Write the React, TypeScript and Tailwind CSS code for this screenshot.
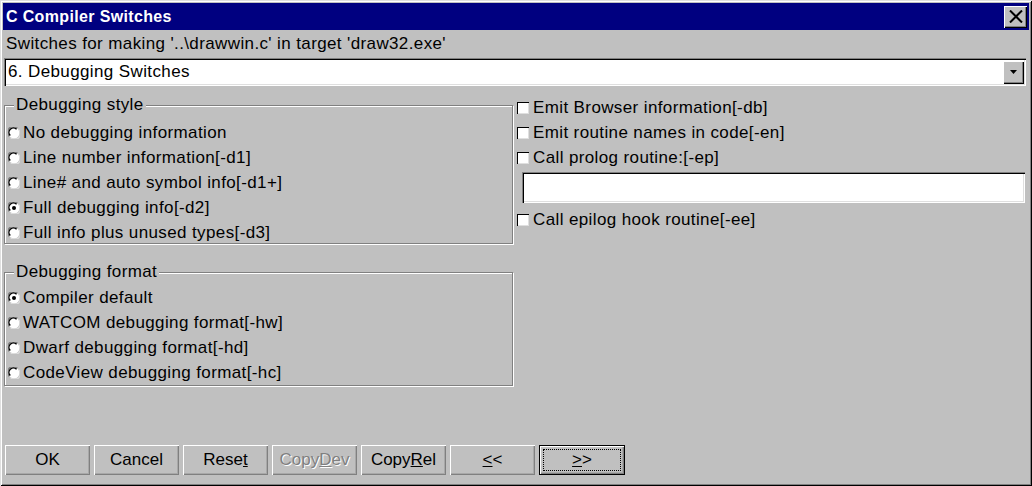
import React from "react";

const font = { fontFamily: '"Liberation Sans", Arial, sans-serif' };

function Radio({ checked }: { checked?: boolean }) {
  return (
    <svg width="12" height="12" viewBox="0 0 12 12" className="shrink-0">
      <circle cx="6" cy="6" r="5.5" fill="#fff" />
      <path d="M1.2 9.2 A5.2 5.2 0 0 1 9.2 1.2" stroke="#808080" strokeWidth="1.5" fill="none" />
      <path d="M2.3 8.6 A4.1 4.1 0 0 1 8.6 2.3" stroke="#000" strokeWidth="1.4" fill="none" />
      <path d="M2.8 10.8 A5.2 5.2 0 0 0 10.8 2.8" stroke="#dfdfdf" strokeWidth="1.2" fill="none" />
      {checked && <circle cx="6" cy="6" r="2" fill="#000" />}
    </svg>
  );
}

function Check() {
  return (
    <div className="w-[12px] h-[12px] shrink-0 bg-white shadow-[inset_1px_1px_0_#000,inset_-1px_-1px_0_#dfdfdf]" />
  );
}

function RadioRow({ label, checked }: { label: string; checked?: boolean }) {
  return (
    <div className="h-[20px] flex items-center gap-[3px] ml-[3px] text-[17px] tracking-[0.38px] text-black whitespace-nowrap">
      <Radio checked={checked} />
      <span>{label}</span>
    </div>
  );
}

function CheckRow({ label }: { label: string }) {
  return (
    <div className="h-[20px] flex items-center gap-[4px] text-[17px] tracking-[0.38px] text-black whitespace-nowrap">
      <Check />
      <span>{label}</span>
    </div>
  );
}

function Btn({ children, def, disabled }: { children: React.ReactNode; def?: boolean; disabled?: boolean }) {
  if (def) {
    return (
      <div className="w-[86px] h-[30px] border border-black bg-[#c0c0c0] shadow-[inset_1px_1px_0_#fff,inset_-1px_-1px_0_#808080,inset_-2px_-2px_0_#a8a8a8] flex items-center justify-center p-[3px]">
        <div className="w-full h-full border border-dotted border-black flex items-center justify-center text-[17px] text-black">
          {children}
        </div>
      </div>
    );
  }
  return (
    <div
      className={
        "w-[85px] h-[30px] bg-[#c0c0c0] shadow-[inset_1px_1px_0_#fff,inset_-1px_-1px_0_#808080,inset_-2px_-2px_0_#a8a8a8] flex items-center justify-center text-[17px] " +
        (disabled ? "text-[#808080] [text-shadow:1px_1px_0_#fff]" : "text-black")
      }
    >
      {children}
    </div>
  );
}

export default function App() {
  return (
    <div
      style={font}
      className="w-[1032px] h-[486px] bg-[#c0c0c0] p-[3px] flex flex-col shadow-[inset_1px_1px_0_#dfdfdf,inset_-1px_-1px_0_#000,inset_2px_2px_0_#fff,inset_-2px_-2px_0_#808080] overflow-hidden"
    >
      {/* Title bar */}
      <div className="h-[27px] bg-[#000080] flex items-center justify-between pl-[3px] pr-[2px] shrink-0">
        <span className="text-white font-bold text-[16px] tracking-[0.35px]">C Compiler Switches</span>
        <div className="w-[23px] h-[22px] bg-[#c0c0c0] shadow-[inset_1px_1px_0_#fff,inset_-1px_-1px_0_#000,inset_-2px_-2px_0_#808080] flex items-center justify-center">
          <svg width="14" height="13" viewBox="0 0 14 13">
            <path d="M1 0.5 L13 12.5 M13 0.5 L1 12.5" stroke="#000" strokeWidth="2" />
          </svg>
        </div>
      </div>

      {/* Label line */}
      <div className="h-[28px] flex items-center pl-[3px] text-[17px] tracking-[0.38px] text-black whitespace-nowrap shrink-0">
        Switches for making '..\drawwin.c' in target 'draw32.exe'
      </div>

      {/* Combo box */}
      <div className="h-[28px] ml-[1px] mr-[3px] bg-white shadow-[inset_1px_1px_0_#808080,inset_2px_2px_0_#000,inset_-1px_-1px_0_#fff,inset_-2px_-2px_0_#dfdfdf] flex items-center justify-between pl-[4px] pr-[2px] shrink-0">
        <span className="text-[17px] tracking-[0.38px] text-black">6. Debugging Switches</span>
        <div className="w-[21px] h-[23px] bg-[#c0c0c0] shadow-[inset_1px_1px_0_#fff,inset_-1px_-1px_0_#000,inset_-2px_-2px_0_#808080] flex items-center justify-center">
          <svg width="8" height="4" viewBox="0 0 8 4">
            <path d="M0 0 H7 L3.5 4 Z" fill="#000" />
          </svg>
        </div>
      </div>

      {/* Main area */}
      <div className="flex-1 flex">
        {/* Left column */}
        <div className="ml-[1px] w-[509px] flex flex-col">
          <fieldset className="mt-[10px] border border-[#808080] shadow-[1px_1px_0_#fff,inset_1px_1px_0_#fff]">
            <legend className="ml-[9px] px-[2px] text-[17px] tracking-[0.38px] leading-[18px] text-black bg-[#c0c0c0]">Debugging style</legend>
            <div className="flex flex-col gap-[5px] pt-[9px]">
              <RadioRow label="No debugging information" />
              <RadioRow label="Line number information[-d1]" />
              <RadioRow label="Line# and auto symbol info[-d1+]" />
              <RadioRow label="Full debugging info[-d2]" checked />
              <RadioRow label="Full info plus unused types[-d3]" />
            </div>
          </fieldset>
          <fieldset className="mt-[19px] border border-[#808080] shadow-[1px_1px_0_#fff,inset_1px_1px_0_#fff]">
            <legend className="ml-[9px] px-[2px] text-[17px] tracking-[0.38px] leading-[18px] text-black bg-[#c0c0c0]">Debugging format</legend>
            <div className="flex flex-col gap-[5px] pt-[7px] pb-[2px]">
              <RadioRow label="Compiler default" checked />
              <RadioRow label="WATCOM debugging format[-hw]" />
              <RadioRow label="Dwarf debugging format[-hd]" />
              <RadioRow label="CodeView debugging format[-hc]" />
            </div>
          </fieldset>
        </div>

        {/* Right column */}
        <div className="flex-1 flex flex-col pl-[4px] pt-[12px]">
          <div className="flex flex-col gap-[5px]">
            <CheckRow label="Emit Browser information[-db]" />
            <CheckRow label="Emit routine names in code[-en]" />
            <CheckRow label="Call prolog routine:[-ep]" />
          </div>
          <div className="mt-[4px] ml-[5px] mr-[4px] h-[31px] bg-white shadow-[inset_1px_1px_0_#808080,inset_2px_2px_0_#000,inset_-1px_-1px_0_#fff,inset_-2px_-2px_0_#dfdfdf]" />
          <div className="mt-[7px]">
            <CheckRow label="Call epilog hook routine[-ee]" />
          </div>
        </div>
      </div>

      {/* Buttons */}
      <div className="flex gap-[4px] ml-[2px] mb-[8px] items-center shrink-0">
        <Btn>OK</Btn>
        <Btn>Cancel</Btn>
        <Btn>
          Rese<u>t</u>
        </Btn>
        <Btn disabled>
          Copy<u>D</u>ev
        </Btn>
        <Btn>
          Copy<u>R</u>el
        </Btn>
        <Btn>
          <u>&lt;</u>&lt;
        </Btn>
        <Btn def>
          <u>&gt;</u>&gt;
        </Btn>
      </div>
    </div>
  );
}
